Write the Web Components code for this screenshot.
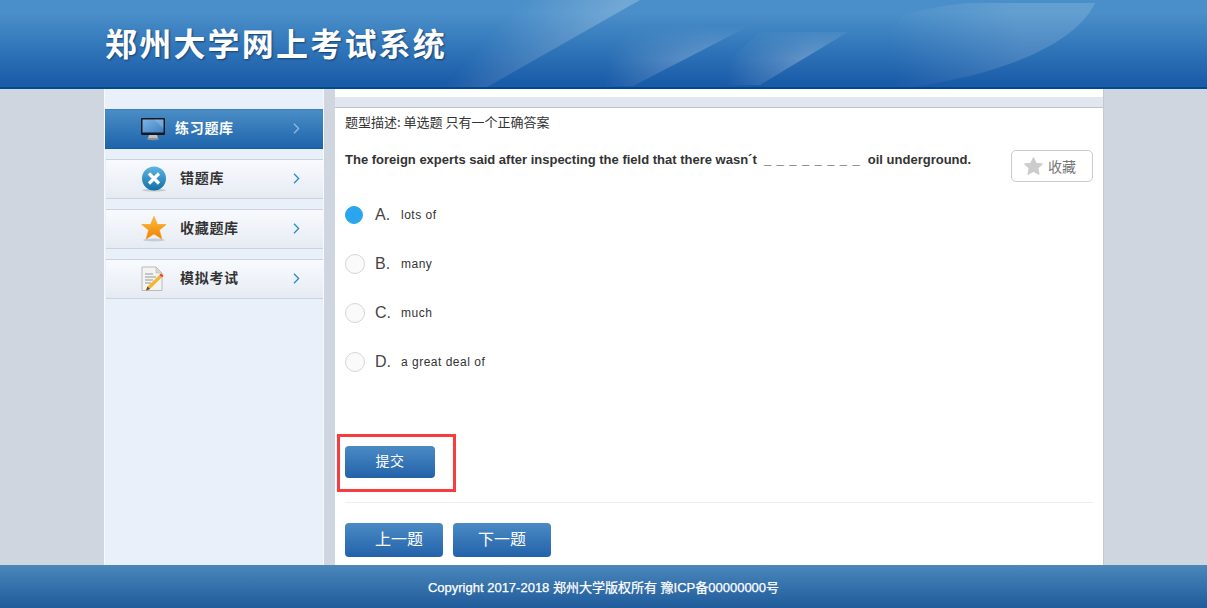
<!DOCTYPE html>
<html>
<head>
<meta charset="utf-8">
<style>
  html, body { margin: 0; height: 100%; }
  body {
    font-family: "Liberation Sans", "Noto Sans CJK SC", sans-serif;
    background: #d0d6e0;
    overflow: hidden;
  }
  #page { display: flex; flex-direction: column; height: 608px; }
</style>
</head>
<body>
<div id="page">
  <exam-header>郑州大学网上考试系统</exam-header>
  <exam-layout>
    <exam-sidebar slot="side">
      <side-item icon="monitor" active>练习题库</side-item>
      <side-item icon="wrong">错题库</side-item>
      <side-item icon="star">收藏题库</side-item>
      <side-item icon="note">模拟考试</side-item>
    </exam-sidebar>
    <question-panel slot="main">
      <option-row letter="A" checked>lots of</option-row>
      <option-row letter="B">many</option-row>
      <option-row letter="C">much</option-row>
      <option-row letter="D">a great deal of</option-row>
    </question-panel>
  </exam-layout>
  <exam-footer>Copyright 2017-2018 郑州大学版权所有 豫ICP备00000000号</exam-footer>
</div>

<script>
class ExamHeader extends HTMLElement {
  constructor() {
    super();
    this.attachShadow({ mode: 'open' });
    this.shadowRoot.innerHTML = `
      <style>
        :host {
          display: block;
          flex: none;
          height: 87px;
          border-bottom: 2px solid #004a8c;
          position: relative;
          overflow: hidden;
          background: linear-gradient(#4a8fc9 0, #4a8fc9 15%, #2f74b8 58%, #1b5ca9 95%);
        }
        svg { position: absolute; left: 0; top: 0; }
        h1 {
          position: relative;
          margin: 0;
          padding: 21px 0 0 105px;
          font: bold 32px/42px "Noto Sans CJK SC", sans-serif;
          letter-spacing: 2.2px;
          color: #fff;
          text-shadow: 1px 1px 2px #17406f;
        }
      </style>
      <svg width="1207" height="87">
        <defs>
          <linearGradient id="v" x1="0" y1="0" x2="0" y2="87" gradientUnits="userSpaceOnUse">
            <stop offset="0.29" stop-color="#fff" stop-opacity="0"/>
            <stop offset="0.68" stop-color="#fff" stop-opacity="1"/>
            <stop offset="1" stop-color="#fff" stop-opacity=".85"/>
          </linearGradient>
          <mask id="fade"><rect width="1207" height="87" fill="url(#v)"/></mask>
          <linearGradient id="b1" x1="585" y1="48" x2="525" y2="-5" gradientUnits="userSpaceOnUse">
            <stop offset="0" stop-color="#fff" stop-opacity=".22"/>
            <stop offset="1" stop-color="#fff" stop-opacity="0"/>
          </linearGradient>
          <linearGradient id="b2" x1="705" y1="56" x2="610" y2="40" gradientUnits="userSpaceOnUse">
            <stop offset="0" stop-color="#fff" stop-opacity=".28"/>
            <stop offset="1" stop-color="#fff" stop-opacity="0"/>
          </linearGradient>
          <linearGradient id="b3" x1="810" y1="58" x2="730" y2="46" gradientUnits="userSpaceOnUse">
            <stop offset="0" stop-color="#fff" stop-opacity=".28"/>
            <stop offset="1" stop-color="#fff" stop-opacity="0"/>
          </linearGradient>
          <linearGradient id="leaf" x1="1020" y1="35" x2="890" y2="55" gradientUnits="userSpaceOnUse">
            <stop offset="0" stop-color="#fff" stop-opacity=".14"/>
            <stop offset="1" stop-color="#fff" stop-opacity="0"/>
          </linearGradient>
        </defs>
        <path d="M487 87 L640 0 L500 0 L430 87 Z" fill="url(#b1)"/>
        <g mask="url(#fade)">
          <path d="M633 86 L751 25 L640 25 L560 86 Z" fill="url(#b2)"/>
          <path d="M760 85 L848 32 L760 32 L700 85 Z" fill="url(#b3)"/>
        </g>
        <path d="M910 87 C1000 75 1075 45 1095 3 L968 3 C945 5 920 10 902 15 L860 87 Z" fill="url(#leaf)"/>
      </svg>
      <h1><slot></slot></h1>`;
  }
}

class ExamLayout extends HTMLElement {
  constructor() {
    super();
    this.attachShadow({ mode: 'open' });
    this.shadowRoot.innerHTML = `
      <style>
        :host {
          display: grid;
          grid-template-columns: 220px 769px;
          column-gap: 11px;
          flex: 1;
          min-height: 0;
          padding-left: 104px;
        }
      </style>
      <slot name="side"></slot>
      <slot name="main"></slot>`;
  }
}

class ExamSidebar extends HTMLElement {
  constructor() {
    super();
    this.attachShadow({ mode: 'open' });
    this.shadowRoot.innerHTML = `
      <style>
        :host {
          display: flex;
          flex-direction: column;
          gap: 10px;
          padding: 20px 0 0 1px;
          background: #e9f0f9;
          border-left: 1px solid #f7f9fc;
          border-right: 1px solid #f7f9fc;
          box-sizing: border-box;
          overflow: hidden;
        }
      </style>
      <slot></slot>`;
  }
}

const sideIcons = {
  monitor: `<svg width="26" height="24" viewBox="0 0 26 24">
    <defs><linearGradient id="m" x1="0" y1="0" x2="1" y2="1"><stop offset="0" stop-color="#7db4e6"/><stop offset="1" stop-color="#3f7fc4"/></linearGradient></defs>
    <rect x="1" y="1" width="24" height="17" rx="1" fill="#15191d"/>
    <rect x="2.5" y="2.5" width="21" height="13" fill="url(#m)"/>
    <path d="M14 2.5h9.500v9z" fill="#fff" opacity=".18"/>
    <path d="M9 18h8l1 3.500H8z" fill="#bfc4c8"/>
    <ellipse cx="13" cy="22" rx="6.500" ry="1.200" fill="#8d9297"/>
  </svg>`,
  wrong: `<svg width="26" height="26" viewBox="-1 0 26 26">
    <defs><linearGradient id="w" x1="0" y1="0" x2="0" y2="1"><stop offset="0" stop-color="#5fb4e4"/><stop offset="1" stop-color="#116fa7"/></linearGradient></defs>
    <ellipse cx="13" cy="24.200" rx="12" ry="1.400" fill="#c3cbd2"/>
    <circle cx="13" cy="12.500" r="12" fill="url(#w)"/>
    <path d="M8 7.500l10 10M18 7.500l-10 10" fill="none" stroke="#fff" stroke-width="3.200"/>
  </svg>`,
  star: `<svg width="26" height="26" viewBox="-1 0 26 26">
    <defs><linearGradient id="s" x1="0" y1="0" x2="0" y2="1"><stop offset="0" stop-color="#fdc03a"/><stop offset="1" stop-color="#ef7f05"/></linearGradient></defs>
    <ellipse cx="13" cy="24" rx="11" ry="1.400" fill="#c6ccd3"/>
    <path d="M13 .5l3.400 8h8.900l-6.900 5.600 2.500 9-7.900-5.200-7.900 5.200 2.500-9L.7 8.500h8.900z" fill="url(#s)" stroke="#f59a10" stroke-width=".6" stroke-linejoin="round"/>
  </svg>`,
  note: `<svg width="24" height="26" viewBox="0 0 24 26">
    <path d="M1 1h14l6 6v17.500H1z" fill="#f3f3f0" stroke="#bbb" stroke-width="1"/>
    <path d="M15 1v6h6z" fill="#d7d7d4" stroke="#bbb" stroke-width=".6"/>
    <path d="M4 8h8M4 11h11M4 14h8M4 17h6" stroke="#b4b8ba" stroke-width="1.300"/>
    <path d="M20 7.500l2.500 2.200L9 23l-4 1.500L6.500 20.500z" fill="#f2b632"/>
    <path d="M20 7.500l2.500 2.200-1.500 1.500-2.500-2.200z" fill="#e8433e"/>
    <path d="M6.500 20.500L9 23l-4 1.500z" fill="#5a4a3a"/>
  </svg>`
};

class SideItem extends HTMLElement {
  constructor() {
    super();
    this.attachShadow({ mode: 'open' });
  }

  connectedCallback() {
    const active = this.hasAttribute('active');
    this.shadowRoot.innerHTML = `
      <style>
        :host {
          display: block;
          height: 40px;
          margin-left: ${active ? '-1px' : '0'};
          box-sizing: border-box;
          flex: none;
        }
        .row {
          display: flex;
          align-items: center;
          height: 100%;
          box-sizing: border-box;
          padding-left: ${active ? '35px' : '34px'};
          font: bold 14px "Noto Sans CJK SC", sans-serif;
          letter-spacing: .7px;
          color: #333;
          background: linear-gradient(#f8fafe, #e6ebf3);
          border-top: 1px solid #cdd3de;
          border-bottom: 1px solid #cdd3de;
        }
        .active {
          color: #fff;
          background: linear-gradient(#4a8dc6, #1e64ab);
          border-top: 1px solid #3b80b8;
          border-bottom: 1px solid #14609f;
        }
        .icon { width: 26px; height: 26px; display: flex; align-items: center; justify-content: center; }
        .label { margin-left: ${active ? '9px' : '14px'}; flex: 1; padding-bottom: 4px; }
        .arrow { margin: 0 23px 2px 0; display: block; }
      </style>
      <div class="row ${active ? 'active' : ''}">
        <span class="icon">${sideIcons[this.getAttribute('icon')]}</span>
        <span class="label"><slot></slot></span>
        <svg class="arrow" width="7" height="11" viewBox="0 0 7 11"><path d="M1 .8l4.600 4.700L1 10.200" fill="none" stroke="${active ? '#8db9e2' : '#2a8ad0'}" stroke-width="1.300"/></svg>
      </div>`;
  }
}

class BlueButton extends HTMLElement {
  constructor() {
    super();
    this.attachShadow({ mode: 'open' });
    this.shadowRoot.innerHTML = `
      <style>
        :host {
          display: inline-flex;
          align-items: center;
          justify-content: center;
          box-sizing: border-box;
          padding-bottom: 4px;
          color: #fff;
          border-radius: 4px;
          background: linear-gradient(#4a8bc5, #2362a9);
          font-family: "Liberation Sans", "Noto Sans CJK SC", sans-serif;
        }
      </style>
      <slot></slot>`;
  }
}

class OptionRow extends HTMLElement {
  constructor() {
    super();
    this.attachShadow({ mode: 'open' });
  }

  connectedCallback() {
    const checked = this.hasAttribute('checked');
    this.shadowRoot.innerHTML = `
      <style>
        :host { display: flex; align-items: center; height: 49px; color: #333; }
        .slot { width: 20px; flex: none; }
        .radio {
          display: block;
          width: ${checked ? '18px' : '20px'};
          height: ${checked ? '18px' : '20px'};
          border-radius: 50%;
          box-sizing: border-box;
          background: ${checked ? '#2ba6ee' : '#fafafa'};
          border: 1px solid ${checked ? '#2ba6ee' : '#d6d6d6'};
        }
        .letter { font: 16px "Liberation Sans", sans-serif; color: #444; width: 26px; margin-left: 10px; }
        .text { font: 12px "Liberation Sans", sans-serif; letter-spacing: .5px; }
      </style>
      <span class="slot"><span class="radio"></span></span>
      <span class="letter">${this.getAttribute('letter')}.</span>
      <span class="text"><slot></slot></span>`;
  }
}

class QuestionPanel extends HTMLElement {
  constructor() {
    super();
    this.attachShadow({ mode: 'open' });
    this.shadowRoot.innerHTML = `
      <style>
        :host {
          display: block;
          background: #fff;
          border-right: 1px solid #c3c8d2;
          overflow: hidden;
        }
        .strip {
          height: 10px;
          margin-top: 8px;
          background: #e2e6ee;
          border-bottom: 1px solid #bfc3cc;
        }
        .body { padding: 0 10px; }
        .desc {
          font: 13px/18px "Noto Sans CJK SC", sans-serif;
          color: #333;
          padding-top: 5px;
        }
        .head { display: flex; justify-content: space-between; margin-top: 18px; }
        .q {
          font: bold 13px/18px "Liberation Sans", "Noto Sans CJK SC", sans-serif;
          color: #333;
          padding-top: 2px;
        }
        .blanks { letter-spacing: .9px; }
        .fav {
          width: 82px;
          height: 32px;
          box-sizing: border-box;
          flex: none;
          margin-top: 1px;
          padding-right: 4px;
          display: flex;
          align-items: center;
          justify-content: center;
          gap: 5px;
          border: 1px solid #ccc;
          border-radius: 5px;
          color: #777;
          font: 14px "Noto Sans CJK SC", sans-serif;
        }
        .options { margin-top: 8px; }
        .submit { position: relative; display: inline-block; margin-top: 60px; vertical-align: top; }
        .submit blue-button { width: 90px; height: 32px; font-size: 14px; letter-spacing: .5px; display: flex; }
        .mark { position: absolute; left: -8px; top: -12px; width: 119px; height: 58px; box-sizing: border-box; border: 3px solid #f73b3f; }
        .rule { height: 1px; background: #eee; margin-top: 24px; }
        .nav { display: flex; gap: 10px; margin-top: 20px; }
        .nav blue-button { width: 98px; height: 34px; font-size: 16px; }
        .nav .prev { padding-left: 10px; }
      </style>
      <div class="strip"></div>
      <div class="body">
        <div class="desc">题型描述: 单选题 只有一个正确答案</div>
        <div class="head">
          <div class="q">The foreign experts said after inspecting the field that there wasn´t &nbsp;<span class="blanks">_ _ _ _ _ _ _ _</span> &nbsp;oil underground.</div>
          <div class="fav">
            <svg width="19" height="18" viewBox="0 0 19 18"><path d="M9.500 .5l2.700 5.700 6.300.8-4.600 4.300 1.200 6.200-5.600-3.100-5.600 3.100 1.200-6.200L.5 7l6.300-.8z" fill="#ccc" stroke="#ccc" stroke-linejoin="round"/></svg>
            <span>收藏</span>
          </div>
        </div>
        <div class="options"><slot></slot></div>
        <div class="submit"><blue-button>提交</blue-button><span class="mark"></span></div>
        <div class="rule"></div>
        <div class="nav"><blue-button class="prev">上一题</blue-button><blue-button>下一题</blue-button></div>
      </div>`;
  }
}

class ExamFooter extends HTMLElement {
  constructor() {
    super();
    this.attachShadow({ mode: 'open' });
    this.shadowRoot.innerHTML = `
      <style>
        :host {
          display: flex;
          flex: none;
          height: 43px;
          align-items: center;
          justify-content: center;
          color: #fff;
          font: 13px "Liberation Sans", "Noto Sans CJK SC", sans-serif;
          -webkit-text-stroke: .25px #fff;
          background: linear-gradient(#4a87bb, #205b9b);
        }
      </style>
      <slot></slot>`;
  }
}

customElements.define('exam-header', ExamHeader);
customElements.define('exam-layout', ExamLayout);
customElements.define('exam-sidebar', ExamSidebar);
customElements.define('side-item', SideItem);
customElements.define('blue-button', BlueButton);
customElements.define('option-row', OptionRow);
customElements.define('question-panel', QuestionPanel);
customElements.define('exam-footer', ExamFooter);
</script>
</body>
</html>
